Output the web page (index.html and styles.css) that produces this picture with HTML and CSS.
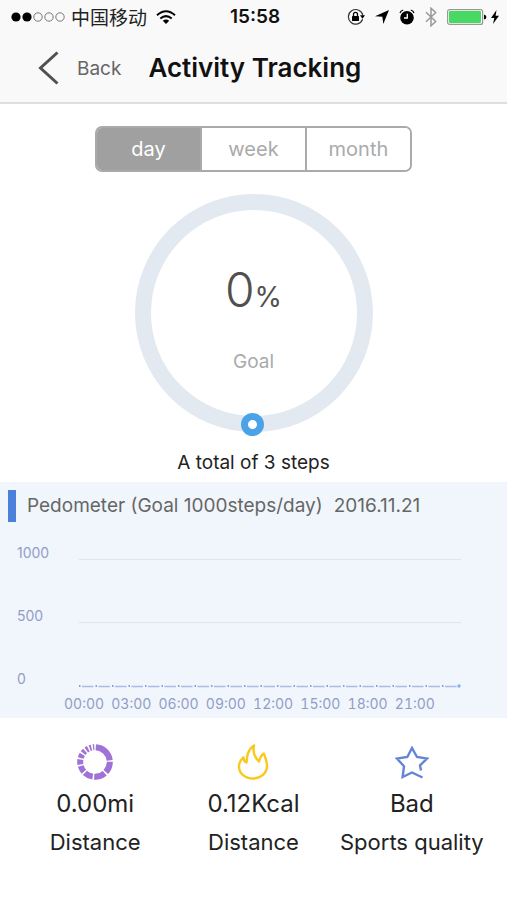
FILE: index.html
```html
<!DOCTYPE html>
<html lang="en">
<head>
<meta charset="utf-8">
<meta name="viewport" content="width=device-width, initial-scale=1">
<title>Activity Tracking</title>
<link rel="stylesheet" href="styles.css">
</head>
<body>
<header class="header">
  <div class="status">
    <div class="carrier">
      <svg width="54" height="14" viewBox="0 0 54 14" aria-hidden="true">
        <g fill="#000"><circle cx="5" cy="7" r="4.6"/><circle cx="16" cy="7" r="4.6"/></g>
        <g fill="none" stroke="#777" stroke-width="1"><circle cx="27" cy="7" r="4.2"/><circle cx="38" cy="7" r="4.2"/><circle cx="49" cy="7" r="4.2"/></g>
      </svg>
      <span class="operator" lang="zh-CN">中国移动</span>
      <svg class="wifi" width="20" height="14" viewBox="0 0 20 14" aria-hidden="true">
        <g fill="none" stroke="#000" stroke-width="2"><path d="M1 5.3Q10-2.8 19 5.3"/><path d="M4.3 8.6Q10 3.6 15.7 8.6"/></g>
        <path d="M6.8 10.8Q10 8.4 13.2 10.8L10 14Z"/>
      </svg>
    </div>
    <time class="clock">15:58</time>
    <div class="indicators">
      <svg width="18" height="18" viewBox="0 0 18 18" aria-hidden="true">
        <path d="M15.6 11.3A7.3 7.3 0 1 1 15.9 7.5" fill="none" stroke="#333" stroke-width="1.2"/>
        <path d="M13 7.2h5l-2.5 3.5Z"/><rect x="5" y="8" width="7" height="5" rx=".6"/>
        <path d="M6.5 8V6.3a2 2 0 0 1 4 0V8" fill="none" stroke="#000" stroke-width="1.3"/>
      </svg>
      <svg width="14" height="14" viewBox="0 0 14 14" aria-hidden="true"><path d="M14 0L8.3 14L7.4 6.8L0 6.2Z"/></svg>
      <svg width="16" height="16" viewBox="0 0 16 16" aria-hidden="true">
        <circle cx="8" cy="8.8" r="6.8"/><path d="M1 4Q1.6 1.7 4.2 1M15 4Q14.4 1.7 11.8 1" fill="none" stroke="#000" stroke-width="1.2"/>
        <path d="M8.3 4.8V9H5" fill="none" stroke="#fff" stroke-width="1.3"/>
      </svg>
      <svg width="12" height="20" viewBox="0 0 12 20" aria-hidden="true"><path d="M1 5.3L10.7 14.5L6 18.8V1.2L10.7 5.5L1 14.7" fill="none" stroke="#999" stroke-width="1.5"/></svg>
      <svg class="battery" width="40" height="16" viewBox="0 0 40 16" aria-hidden="true">
        <rect x=".6" y=".6" width="35" height="14.8" rx="2" fill="none" stroke="#999" stroke-width="1.2"/><rect x="2" y="2" width="32" height="12" rx="1" fill="#48d864"/><path d="M37 5.5Q39.4 6 39.4 8T37 10.5Z"/>
      </svg>
      <svg width="8" height="14" viewBox="0 0 8 14" aria-hidden="true"><path d="M5.5 0L0 8H3.3L2 14L8 5.7H4.6Z"/></svg>
    </div>
  </div>
  <nav class="nav">
    <a class="back" href="#">
      <svg width="22" height="34" viewBox="0 0 22 34" aria-hidden="true"><path d="M20.5 1.5L3.5 17L20.5 32.5" fill="none" stroke="#505050" stroke-width="3"/></svg>
      <span>Back</span>
    </a>
    <h1 class="title">Activity Tracking</h1>
  </nav>
</header>
<main>
  <div class="tabs" role="group" aria-label="Period">
    <button class="tab active" type="button" aria-pressed="true">day</button>
    <button class="tab" type="button" aria-pressed="false">week</button>
    <button class="tab" type="button" aria-pressed="false">month</button>
  </div>
  <section class="progress">
    <div class="ring">
      <p class="percent">0<span class="unit">%</span></p>
      <p class="goal">Goal</p>
      <span class="knob"></span>
    </div>
    <p class="total">A total of 3 steps</p>
  </section>
  <section class="pedometer">
    <h2 class="heading"><span>Pedometer (Goal 1000steps/day)</span><time>2016.11.21</time></h2>
    <div class="chart">
      <div class="row"><span class="level">1000</span><span class="grid"></span></div>
      <div class="row"><span class="level">500</span><span class="grid"></span></div>
      <div class="row"><span class="level">0</span>
        <svg class="series" viewBox="0 0 382 4" aria-hidden="true"><path d="M3 2.5H378" stroke="#a9bce6" stroke-width="1.4" stroke-dasharray="11.5 5"/><path d="M0 2H378" stroke="#8ba0d0" stroke-width="2" stroke-dasharray="1.5 15"/><circle cx="380" cy="2" r="1.7" fill="#75b9ec"/></svg>
      </div>
      <div class="hours"><span>00:00</span><span>03:00</span><span>06:00</span><span>09:00</span><span>12:00</span><span>15:00</span><span>18:00</span><span>21:00</span></div>
    </div>
  </section>
  <section class="stats">
    <div class="stat">
      <svg width="36" height="36" viewBox="0 0 36 36" aria-hidden="true">
        <circle cx="18" cy="18" r="14.8" fill="none" stroke="#9f72d5" stroke-width="6" pathLength="360" stroke-dasharray="80 6 44 6 44 6 34 6 25 6 20 6 15 6 11 6 9 6 7 6 5 6" transform="rotate(-87 18 18)"/>
      </svg>
      <strong class="value">0.00mi</strong><span class="name">Distance</span>
    </div>
    <div class="stat">
      <svg width="36" height="36" viewBox="0 0 36 36" aria-hidden="true"><path d="M19 1.5C12.5 6 12 12 11.5 18.5C8.8 17.5 8.6 15.5 8.3 13.3C5.5 16 4 19 4 22.2C4 29.5 10 34.5 18 34.5S32 29 32 22C32 17 30.5 13.5 28.8 9.5C26 11 25 14 24 17.5C20.5 14 17.5 8 19 1.5Z" fill="none" stroke="#fac91e" stroke-width="2.4" stroke-linejoin="round"/></svg>
      <strong class="value">0.12Kcal</strong><span class="name">Distance</span>
    </div>
    <div class="stat">
      <svg width="36" height="36" viewBox="0 0 36 36" aria-hidden="true"><path d="M28.5 33.5L18 28.5L8.6 33L10 22.3L3 14.5L13.3 13L18 4L23 13L33 14.5L26 21.5L27 26.5" fill="none" stroke="#6485d6" stroke-width="2.4"/></svg>
      <strong class="value">Bad</strong><span class="name">Sports quality</span>
    </div>
  </section>
</main>
</body>
</html>
```
FILE: styles.css
```css
* { box-sizing: border-box; }
body { margin: 0; background: #fff; color: #222; font-family: Inter, "Noto Sans CJK SC", sans-serif; }
p, h1, h2 { margin: 0; font-weight: 400; }
svg { display: block; flex: none; }
.header { background: #f9f9f9; border-bottom: 2px solid #dedede; }
.status { display: grid; grid-template-columns: 1fr auto 1fr; align-items: center; height: 34px; padding: 0 8px 0 11px; }
.carrier, .indicators { display: flex; align-items: center; }
.operator { margin: 0 9px 0 6px; font-size: 19px; line-height: 24px; white-space: nowrap; font-family: "Noto Sans CJK SC", sans-serif; }
.clock { color: #111; font-size: 19px; font-weight: 600; line-height: 24px; }
.indicators { justify-content: flex-end; gap: 10px; }
.battery + svg { margin-left: -6px; }
.nav { display: flex; align-items: center; height: 68px; padding: 0 37px; }
.back { display: flex; align-items: center; gap: 18px; color: #666; font-size: 19px; text-decoration: none; }
.title { margin-left: 27px; color: #111; font-size: 26px; font-weight: 600; line-height: 32px; white-space: nowrap; }
.tabs { display: flex; width: 62.5%; height: 46px; margin: 22px auto 0; border: 2px solid #aaa; border-radius: 7px; overflow: hidden; }
.tab { flex: 1; padding: 0; border: 0; border-left: 2px solid #aaa; background: #fff; color: #aaa; font: 20px/24px Inter, sans-serif; }
.tab:first-child { border-left: 0; }
.tab.active { background: #a0a0a0; color: #fff; }
.progress { display: flex; flex-direction: column; align-items: center; padding-top: 22px; }
.ring { position: relative; width: 238px; height: 238px; padding-top: 52px; border: 16px solid #e3e9f1; border-radius: 50%; text-align: center; }
.percent { color: #505050; font-size: 48px; font-weight: 300; line-height: 56px; }
.unit { font-size: 28px; font-weight: 400; }
.goal { margin-top: 25px; color: #aaa; font-size: 19px; line-height: 24px; }
.knob { position: absolute; left: 50%; bottom: -20px; width: 23px; height: 23px; margin-left: -13px; border: 7px solid #4aa3e6; border-radius: 50%; background: #fff; }
.total { margin-top: 19px; font-size: 19px; line-height: 24px; }
.pedometer { margin-top: 7px; padding: 8px 8px 4px; background: #f1f6fd; }
.heading { display: flex; gap: 11px; padding-left: 11px; border-left: 8px solid #4b80db; color: #666; font-size: 19px; line-height: 32px; white-space: nowrap; }
.chart { padding: 21px 38px 0 9px; color: #929dc7; }
.row { display: flex; align-items: flex-start; height: 63px; font-size: 14px; line-height: 20px; }
.row:nth-child(3) { height: 20px; }
.level { width: 62px; }
.grid { flex: 1; margin-top: 16px; border-top: 1px solid #dfe5ee; }
.series { flex: 1; min-width: 0; height: 4px; margin-top: 15px; }
.hours { display: flex; justify-content: space-between; margin: 5px 26px 0 47px; font-size: 14px; line-height: 20px; font-variant-numeric: tabular-nums; }
.stats { display: grid; grid-template-columns: repeat(3, 1fr); padding: 26px 16px 0; }
.stat { display: flex; flex-direction: column; align-items: center; white-space: nowrap; }
.value { margin-top: 8px; font-size: 24px; font-weight: 400; line-height: 32px; }
.name { margin-top: 8px; font-size: 22px; line-height: 28px; }
```
